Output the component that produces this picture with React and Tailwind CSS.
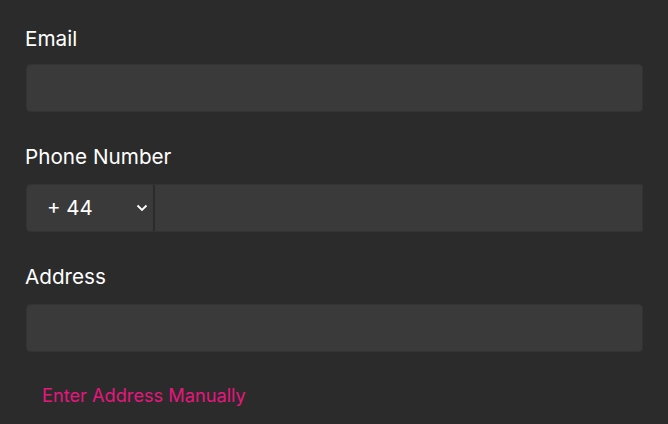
import React, { useState } from "react";

const ContactForm = () => {
  const [email, setEmail] = useState("");
  const [code, setCode] = useState("+ 44");
  const [phone, setPhone] = useState("");
  const [address, setAddress] = useState("");

  return (
    <div
      className="w-[668px] h-[424px] bg-[#2b2b2b] pl-[26px] pr-[25px] pt-[26px] overflow-hidden"
      style={{ fontFamily: "Inter, 'Noto Sans', sans-serif" }}
    >
      <label className="block text-[20.7px] leading-[26px] text-white -ml-px">Email</label>
      <input
        type="email"
        value={email}
        onChange={(e) => setEmail(e.target.value)}
        className="mt-[12px] block w-full h-[48px] rounded-[4px] bg-[#3a3a3a] border border-[#333333] px-4 text-white outline-none"
      />

      <label className="block mt-[32px] text-[20.7px] leading-[26px] text-white -ml-px">
        Phone Number
      </label>
      <div className="mt-[14px] flex h-[48px] border border-[#333333] rounded-l-[4px] bg-[#3a3a3a]">
        <div className="relative w-[128px] flex items-center border-r-2 border-[#2b2b2b]">
          <span className="pl-[20px] text-[20.5px] text-white">{code}</span>
          <svg
            className="absolute right-[5px] top-1/2 -translate-y-1/2"
            width="12"
            height="8"
            viewBox="0 0 12 8"
            fill="none"
          >
            <path d="M1.5 1.5 L6 6 L10.5 1.5" stroke="white" strokeWidth="1.8" />
          </svg>
        </div>
        <input
          type="tel"
          value={phone}
          onChange={(e) => setPhone(e.target.value)}
          className="flex-1 min-w-0 bg-transparent px-4 text-white outline-none"
        />
      </div>

      <label className="block mt-[32px] text-[20.7px] leading-[26px] text-white -ml-px">Address</label>
      <input
        type="text"
        value={address}
        onChange={(e) => setAddress(e.target.value)}
        className="mt-[14px] block w-full h-[48px] rounded-[4px] bg-[#3a3a3a] border border-[#333333] px-4 text-white outline-none"
      />

      <button
        type="button"
        onClick={() => setCode(code)}
        className="mt-[32px] ml-[16px] text-[18.2px] leading-[22px] text-[#e8157f]"
      >
        Enter Address Manually
      </button>
    </div>
  );
};

export default ContactForm;
